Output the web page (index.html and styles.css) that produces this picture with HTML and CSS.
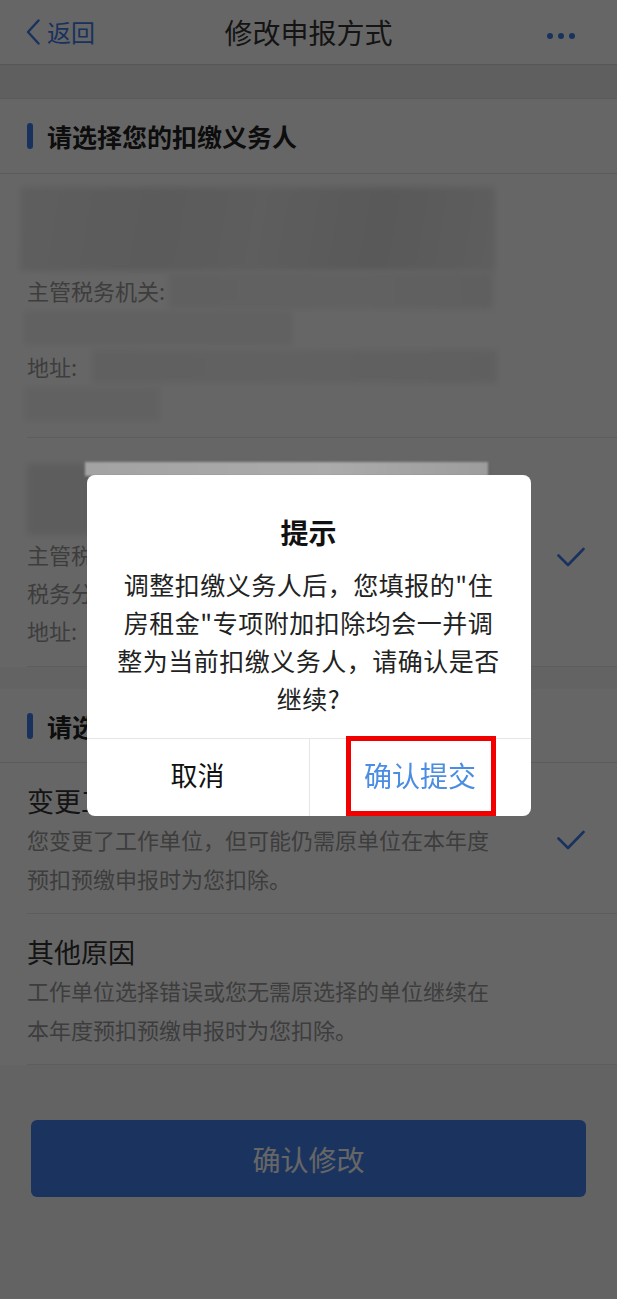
FILE: index.html
```html
<!DOCTYPE html>
<html>
<head>
    <title>修改申报方式</title>
    <meta charset="UTF-8">
    <meta name="viewport" content="width=device-width, initial-scale=1.0">
    <link rel="stylesheet" href="styles.css">
</head>
<body>
    <div class="page">
        <header class="nav">
            <a class="back">
                <svg width="14" height="26" viewBox="0 0 14 26"><polyline points="12.5,1.5 2,13 12.5,24.5" fill="none" stroke="currentColor" stroke-width="2.4" stroke-linecap="round" stroke-linejoin="round"/></svg>
                返回
            </a>
            <h1 class="nav-title">修改申报方式</h1>
            <div class="more"><i></i><i></i><i></i></div>
        </header>
        <div class="band"></div>

        <section class="panel">
            <h2 class="sec-title">请选择您的扣缴义务人</h2>

            <div class="agent">
                <div class="agent-info">
                    <div class="mask mask-name"></div>
                    <div class="line"><span class="label">主管税务机关:</span><span class="mask mask-office"></span></div>
                    <div class="line"><span class="mask mask-office2"></span></div>
                    <div class="line"><span class="label">地址:</span><span class="mask mask-addr"></span></div>
                    <div class="line"><span class="mask mask-addr2"></span></div>
                </div>
            </div>

            <div class="agent agent-second">
                <div class="agent-info">
                    <div class="mask mask-name2"></div>
                    <div class="line"><span class="label">主管税务机关:</span></div>
                    <div class="line"><span class="label">税务分局:</span></div>
                    <div class="line"><span class="label">地址:</span></div>
                </div>
                <svg class="check" width="28" height="20" viewBox="0 0 28 20"><polyline points="1.5,8.5 11,18 26.5,2" fill="none" stroke="currentColor" stroke-width="2.6" stroke-linecap="round" stroke-linejoin="round"/></svg>
            </div>
        </section>

        <div class="band-sm"></div>

        <section class="panel">
            <h2 class="sec-title sec-title-2">请选择变更原因</h2>

            <div class="reason">
                <div class="reason-info">
                    <div class="reason-title">变更工作单位</div>
                    <p class="reason-desc">您变更了工作单位，但可能仍需原单位在本年度预扣预缴申报时为您扣除。</p>
                </div>
                <svg class="check" width="28" height="20" viewBox="0 0 28 20"><polyline points="1.5,8.5 11,18 26.5,2" fill="none" stroke="currentColor" stroke-width="2.6" stroke-linecap="round" stroke-linejoin="round"/></svg>
            </div>

            <div class="reason">
                <div class="reason-info">
                    <div class="reason-title">其他原因</div>
                    <p class="reason-desc">工作单位选择错误或您无需原选择的单位继续在本年度预扣预缴申报时为您扣除。</p>
                </div>
            </div>
        </section>

        <div class="actions">
            <button class="submit">确认修改</button>
        </div>
    </div>

    <div class="overlay">
        <div class="smear"></div>
        <div class="dialog">
            <h3 class="dialog-title">提示</h3>
            <p class="dialog-text">调整扣缴义务人后，您填报的"住房租金"专项附加扣除均会一并调整为当前扣缴义务人，请确认是否继续?</p>
            <div class="dialog-actions">
                <button class="dialog-btn cancel">取消</button>
                <button class="dialog-btn confirm">确认提交</button>
            </div>
        </div>
    </div>
</body>
</html>
```

FILE: styles.css
```css
body {
    margin: 0;
    font-family: "Noto Sans CJK SC", "Noto Sans", sans-serif;
    background: #f7f7f8;
    color: #333;
}
.page {
    min-height: 1299px;
}
.nav {
    display: grid;
    grid-template-columns: 1fr auto 1fr;
    align-items: center;
    height: 64px;
    background: #fff;
    border-bottom: 1px solid #dadada;
}
.back {
    display: flex;
    align-items: center;
    gap: 7px;
    padding-left: 26px;
    color: #3c7ee8;
    font-size: 24px;
    line-height: 30px;
}
.nav-title {
    margin: 0;
    font-size: 28px;
    font-weight: 400;
    color: #333;
}
.more {
    justify-self: end;
    display: flex;
    gap: 5px;
    margin-top: 8px;
    padding-right: 42px;
}
.more i {
    width: 6px;
    height: 6px;
    border-radius: 50%;
    background: #3c7ee8;
}
.band {
    height: 33px;
    background: #eeeef0;
    border-bottom: 1px solid #e0e0e0;
}
.band-sm {
    height: 22px;
}
.panel {
    background: #fff;
}
.sec-title {
    display: flex;
    align-items: center;
    gap: 14px;
    height: 74px;
    margin: 0;
    padding-left: 27px;
    font-size: 25px;
    font-weight: 700;
    color: #222;
    border-bottom: 1px solid #e6e6e6;
}
.sec-title::before {
    content: "";
    width: 6px;
    height: 26px;
    border-radius: 3px;
    background: #3c7ee8;
}
.sec-title-2 {
    height: 73px;
}
.agent {
    position: relative;
    display: flex;
    align-items: center;
    justify-content: space-between;
    padding: 13px 32px 15px 27px;
}
.agent::after,
.reason::after {
    content: "";
    position: absolute;
    left: 27px;
    right: 0;
    bottom: 0;
    height: 1px;
    background: #e8e8e8;
}
.agent-second {
    padding: 26px 32px 18px 27px;
}
.line {
    display: flex;
    align-items: center;
    height: 38px;
}
.label {
    font-size: 22px;
    color: #999;
    white-space: nowrap;
}
.mask {
    display: block;
    filter: blur(3px);
}
.mask-name {
    margin-left: -7px;
    width: 475px;
    height: 84px;
    background: linear-gradient(100deg, #ececec 0%, #e3e3e3 30%, #eaeaea 50%, #dedede 75%, #ebebeb 100%);
}
.mask-office {
    margin-left: 3px;
    width: 325px;
    height: 37px;
    background: linear-gradient(90deg, #f1f1f1, #f3f3f3 60%, #ededed);
}
.mask-office2 {
    margin-left: -3px;
    width: 269px;
    height: 34px;
    background: #f2f2f2;
}
.mask-addr {
    margin-left: 15px;
    width: 405px;
    height: 33px;
    background: linear-gradient(90deg, #f0f0f0, #f3f3f3 50%, #eeeeee);
}
.mask-addr2 {
    margin-left: -3px;
    width: 136px;
    height: 34px;
    background: #f3f3f3;
}
.mask-name2 {
    width: 461px;
    height: 71px;
    background: #e9e9e9;
}
.check {
    flex-shrink: 0;
    color: #3c7ee8;
}
.reason {
    position: relative;
    display: flex;
    align-items: center;
    justify-content: space-between;
    padding: 19px 32px 16px 27px;
}
.reason-title {
    font-size: 27px;
    line-height: 38px;
    color: #333;
}
.reason-desc {
    width: 470px;
    margin: 0;
    font-size: 22px;
    line-height: 39px;
    color: #999;
}
.actions {
    padding: 55px 31px;
}
.submit {
    display: block;
    width: 100%;
    height: 77px;
    border: 0;
    border-radius: 6px;
    background: #4382ed;
    color: #fff;
    font-family: inherit;
    font-size: 28px;
}
.overlay {
    position: fixed;
    top: 0;
    left: 0;
    right: 0;
    bottom: 0;
    display: flex;
    justify-content: center;
    align-items: flex-start;
    padding-top: 475px;
    background: rgba(0, 0, 0, 0.6);
}
.smear {
    position: absolute;
    left: 85px;
    top: 462px;
    width: 403px;
    height: 14px;
    background: linear-gradient(90deg, #a3a3a3, #ababab 60%, #9d9d9d);
    filter: blur(1px);
}
.dialog {
    position: relative;
    width: 444px;
    background: #fff;
    border-radius: 8px;
    text-align: center;
}
.dialog-title {
    margin: 0;
    padding-top: 40px;
    font-size: 28px;
    line-height: 34px;
    font-weight: 700;
    color: #111;
}
.dialog-text {
    margin: 16px 0 0;
    padding: 0 28px 21px;
    font-size: 25px;
    letter-spacing: 0.5px;
    line-height: 38px;
    color: #222;
}
.dialog-actions {
    display: grid;
    grid-template-columns: 1fr 1fr;
    border-top: 1px solid #e6e6e6;
}
.dialog-btn {
    height: 77px;
    padding: 0 0 6px;
    border: 0;
    background: none;
    font-family: inherit;
    font-size: 27px;
    color: #111;
}
.confirm {
    position: relative;
    border-left: 1px solid #e6e6e6;
    font-size: 28px;
    color: #4a8de2;
}
.confirm::after {
    content: "";
    position: absolute;
    left: 36px;
    top: -3px;
    width: 150px;
    height: 80px;
    border: 5px solid #f20000;
    box-sizing: border-box;
}
```
